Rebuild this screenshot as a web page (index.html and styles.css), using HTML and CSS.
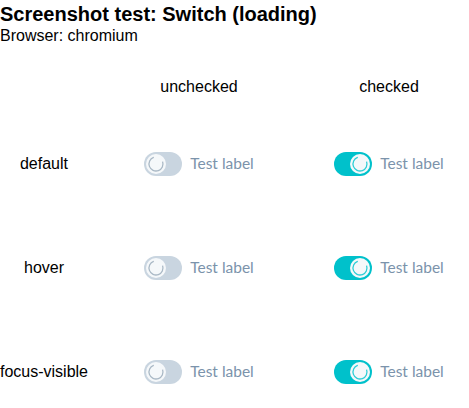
FILE: index.html
```html
<!DOCTYPE html>
<html>
<head>
<meta charset="utf-8">
<link rel="stylesheet" href="styles.css">
</head>
<body>
<h1 class="title">Screenshot test: Switch (loading)</h1>
<p class="browser">Browser: chromium</p>
<div class="grid">
  <div class="cell head"></div>
  <div class="cell head">unchecked</div>
  <div class="cell head">checked</div>

  <div class="cell rowlabel">default</div>
  <div class="cell"><label class="switch"><span class="track"><span class="thumb"><svg viewBox="0 0 20 20"><circle cx="10" cy="10" r="7" class="arc"/></svg></span></span><span class="text">Test label</span></label></div>
  <div class="cell"><label class="switch on"><span class="track"><span class="thumb"><svg viewBox="0 0 20 20"><circle cx="10" cy="10" r="7" class="arc"/></svg></span></span><span class="text">Test label</span></label></div>

  <div class="cell rowlabel">hover</div>
  <div class="cell"><label class="switch"><span class="track"><span class="thumb"><svg viewBox="0 0 20 20"><circle cx="10" cy="10" r="7" class="arc"/></svg></span></span><span class="text">Test label</span></label></div>
  <div class="cell"><label class="switch on"><span class="track"><span class="thumb"><svg viewBox="0 0 20 20"><circle cx="10" cy="10" r="7" class="arc"/></svg></span></span><span class="text">Test label</span></label></div>

  <div class="cell rowlabel">focus-visible</div>
  <div class="cell"><label class="switch"><span class="track"><span class="thumb"><svg viewBox="0 0 20 20"><circle cx="10" cy="10" r="7" class="arc"/></svg></span></span><span class="text">Test label</span></label></div>
  <div class="cell"><label class="switch on"><span class="track"><span class="thumb"><svg viewBox="0 0 20 20"><circle cx="10" cy="10" r="7" class="arc"/></svg></span></span><span class="text">Test label</span></label></div>
</div>
</body>
</html>
```
FILE: styles.css
```css
html, body {
  margin: 0;
  padding: 0;
  background: #fff;
  font-family: "Liberation Sans", Arial, sans-serif;
  color: #000;
}
.title {
  margin: 0;
  padding-top: 2px;
  font-size: 20px;
  line-height: 24px;
  font-weight: bold;
}
.browser {
  margin: 0;
  font-size: 16px;
  line-height: 20px;
}
.grid {
  display: grid;
  grid-template-columns: 88px 222px 158px;
  grid-template-rows: 50px 104px 104px 104px;
  margin-top: 16px;
}
.cell {
  display: flex;
  align-items: center;
  justify-content: center;
  font-size: 16px;
  white-space: nowrap;
}
.switch {
  display: flex;
  align-items: center;
  gap: 8px;
}
.track {
  display: flex;
  align-items: center;
  width: 38px;
  height: 24px;
  box-sizing: border-box;
  padding: 2px;
  border-radius: 12px;
  background: #c9d5e0;
}
.thumb {
  width: 20px;
  height: 20px;
  border-radius: 50%;
  background: #f5f8fa;
  display: block;
}
.thumb svg {
  display: block;
  width: 20px;
  height: 20px;
}
.arc {
  fill: none;
  stroke: #a9b8c5;
  stroke-width: 1.3;
  stroke-dasharray: 33 11;
  transform: rotate(-20deg);
  transform-origin: 10px 10px;
}
.switch.on .track {
  background: #00c1cb;
  justify-content: flex-end;
}
.switch.on .arc {
  stroke: #2ccdd6;
}
.text {
  font-family: Lato, sans-serif;
  font-size: 15.5px;
  line-height: 20px;
  padding-bottom: 2px;
  color: #7b93ab;
}
```
